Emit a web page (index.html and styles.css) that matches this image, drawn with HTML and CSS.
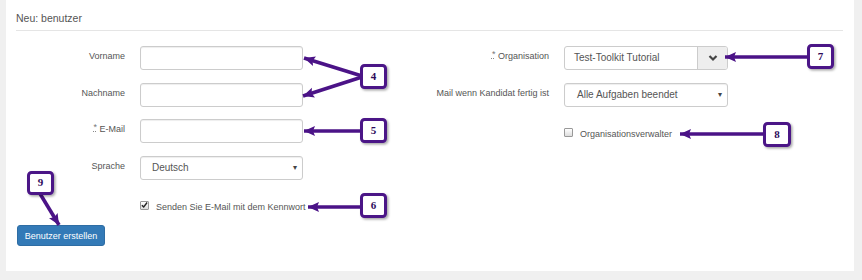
FILE: index.html
```html
<!DOCTYPE html>
<html lang="de">
<head>
    <meta charset="UTF-8">
    <meta name="viewport" content="width=device-width, initial-scale=1.0">
    <title>Neu: benutzer</title>
    <link rel="stylesheet" href="styles.css">
</head>
<body>
<div class="panel">
    <div class="panel-heading">Neu: benutzer</div>

    <form class="user-form">
        <div class="columns">
            <!-- left column -->
            <div class="col col-left">
                <div class="form-row">
                    <label class="form-label">Vorname</label>
                    <div class="form-control"></div>
                </div>
                <div class="form-row">
                    <label class="form-label">Nachname</label>
                    <div class="form-control"></div>
                </div>
                <div class="form-row">
                    <label class="form-label"><abbr class="req">*</abbr> E-Mail</label>
                    <div class="form-control"></div>
                </div>
                <div class="form-row">
                    <label class="form-label">Sprache</label>
                    <div class="form-control select">
                        <span class="select-text">Deutsch</span>
                        <span class="caret">&#9662;</span>
                    </div>
                </div>
                <div class="check-row">
                    <span class="checkbox">
                        <svg width="8" height="8" viewBox="0 0 8 8"><path d="M1 4.2 L3.1 6.3 L7 1.2" fill="none" stroke="#222" stroke-width="1.6"/></svg>
                    </span>
                    <span class="check-label">Senden Sie E-Mail mit dem Kennwort</span>
                </div>
            </div>

            <!-- right column -->
            <div class="col col-right">
                <div class="form-row">
                    <label class="form-label"><abbr class="req">*</abbr> Organisation</label>
                    <div class="input-group">
                        <div class="group-text">Test-Toolkit Tutorial</div>
                        <div class="group-addon">
                            <svg width="10" height="8" viewBox="0 0 10 8"><path d="M1.5 2 L5 5.5 L8.5 2" fill="none" stroke="#444" stroke-width="2.2"/></svg>
                        </div>
                    </div>
                </div>
                <div class="form-row">
                    <label class="form-label">Mail wenn Kandidat fertig ist</label>
                    <div class="form-control select wide">
                        <span class="select-text">Alle Aufgaben beendet</span>
                        <span class="caret">&#9662;</span>
                    </div>
                </div>
                <div class="check-row">
                    <span class="checkbox"></span>
                    <span class="check-label">Organisationsverwalter</span>
                </div>
            </div>
        </div>

        <button type="button" class="btn-primary">Benutzer erstellen</button>
    </form>
</div>

<!-- tutorial callouts -->
<svg class="callouts" width="862" height="280" viewBox="0 0 862 280">
    <defs>
        <marker id="head" markerUnits="userSpaceOnUse" markerWidth="12" markerHeight="12" refX="11" refY="6" orient="auto">
            <path d="M0 1 L11 6 L0 11 L2 6 Z" fill="#4b1387"/>
        </marker>
        <filter id="shadow" x="-30%" y="-30%" width="170%" height="170%">
            <feDropShadow dx="1.5" dy="1.5" stdDeviation="1" flood-color="#000" flood-opacity="0.35"/>
        </filter>
    </defs>

    <g stroke="#4b1387" stroke-width="3.6" fill="none" marker-end="url(#head)">
        <line x1="362" y1="76" x2="304" y2="58"/>
        <line x1="362" y1="77" x2="303" y2="96"/>
        <line x1="362" y1="131" x2="304" y2="131"/>
        <line x1="362" y1="207" x2="308" y2="207"/>
        <line x1="810" y1="57" x2="725" y2="57"/>
        <line x1="766" y1="134" x2="680" y2="134"/>
        <line x1="39" y1="192" x2="59" y2="225"/>
    </g>

    <g class="box" filter="url(#shadow)">
        <rect x="361.5" y="65.5" width="24" height="22" rx="3"/>
        <rect x="361.5" y="119.5" width="24" height="22" rx="3"/>
        <rect x="361.5" y="194.5" width="24" height="22" rx="3"/>
        <rect x="808.5" y="45.5" width="24" height="22" rx="3"/>
        <rect x="764.5" y="123.5" width="25" height="22" rx="3"/>
        <rect x="28.5" y="172.5" width="24" height="21" rx="3"/>
    </g>

    <g class="box-num">
        <text x="373.5" y="80">4</text>
        <text x="373.5" y="134">5</text>
        <text x="373.5" y="209">6</text>
        <text x="820.5" y="60">7</text>
        <text x="777" y="138">8</text>
        <text x="40.5" y="186">9</text>
    </g>
</svg>
</body>
</html>
```

FILE: styles.css
```css
body {
    margin: 0;
    background-color: #f0f0f0;
    font-family: "Liberation Sans", Arial, sans-serif;
    color: #555;
}

.panel {
    position: relative;
    width: 848px;
    height: 271px;
    margin-left: 6px;
    background-color: #fff;
}

.panel-heading {
    margin: 0 11px 0 10px;
    height: 30px;
    line-height: 36px;
    font-size: 10.5px;
    color: #555;
    border-bottom: 1px solid #e5e5e5;
}

.user-form {
    padding: 15px 10px 0 10px;
}

.columns {
    display: flex;
}

.col-left {
    width: 414px;
}

.col-right {
    width: 410px;
}

/* one label + control line */
.form-row {
    display: flex;
    align-items: flex-start;
    height: 24px;
    margin-bottom: 12.5px;
}

.form-label {
    width: 109px;
    padding-top: 5px;
    text-align: right;
    font-size: 9px;
    line-height: 11px;
    color: #555;
}

.col-right .form-label {
    width: 119px;
}

.req {
    display: inline-block;
    position: relative;
    top: -2px;
    font-size: 9px;
    line-height: 8px;
    color: #777;
    text-decoration: underline dotted #888;
    text-underline-offset: 1px;
}

.form-control {
    box-sizing: border-box;
    width: 163px;
    height: 24px;
    margin-left: 15px;
    border: 1px solid #ccc;
    border-radius: 3px;
    box-shadow: inset 0 1px 1px rgba(0, 0, 0, 0.07);
    background-color: #fff;
}

.select {
    display: flex;
    align-items: center;
    justify-content: space-between;
    padding: 0 5px 0 11px;
    font-size: 10px;
    color: #555;
}

.select.wide {
    width: 164px;
    padding-left: 12px;
}

.caret {
    font-size: 8px;
    color: #444;
}

.input-group {
    display: flex;
    box-sizing: border-box;
    width: 164px;
    height: 24px;
    margin-left: 15px;
    border: 1px solid #ccc;
    border-radius: 3px;
    overflow: hidden;
}

.group-text {
    flex: 1;
    padding-left: 9px;
    line-height: 22px;
    font-size: 10px;
    color: #555;
}

.group-addon {
    display: flex;
    align-items: center;
    justify-content: center;
    width: 29px;
    background-color: #eee;
    border-left: 1px solid #ccc;
}

/* checkbox lines */
.check-row {
    display: flex;
    align-items: center;
    height: 18px;
    padding-top: 6px;
    margin-left: 124px;
}

.col-right .check-row {
    margin-left: 134px;
}

.checkbox {
    display: flex;
    align-items: center;
    justify-content: center;
    box-sizing: border-box;
    width: 9px;
    height: 9px;
    margin-top: -4px;
    border: 1px solid #999;
    border-radius: 1px;
    background: linear-gradient(#fff, #ddd);
}

.check-label {
    margin-left: 7px;
    font-size: 9px;
    color: #555;
}

.btn-primary {
    display: block;
    width: 88px;
    height: 21px;
    margin: 9px 0 0 1px;
    padding: 0;
    border: 1px solid #2e6da4;
    border-radius: 3px;
    background-color: #337ab7;
    color: #fff;
    font-family: "Liberation Sans", Arial, sans-serif;
    font-size: 9px;
}

/* annotation overlay */
.callouts {
    position: absolute;
    top: 0;
    left: 0;
    pointer-events: none;
}

.box rect {
    fill: #fff;
    stroke: #4b1387;
    stroke-width: 3;
}

.box-num text {
    font-family: "Liberation Serif", "Times New Roman", serif;
    font-weight: bold;
    font-size: 11px;
    fill: #2d0a5a;
    text-anchor: middle;
}
```
